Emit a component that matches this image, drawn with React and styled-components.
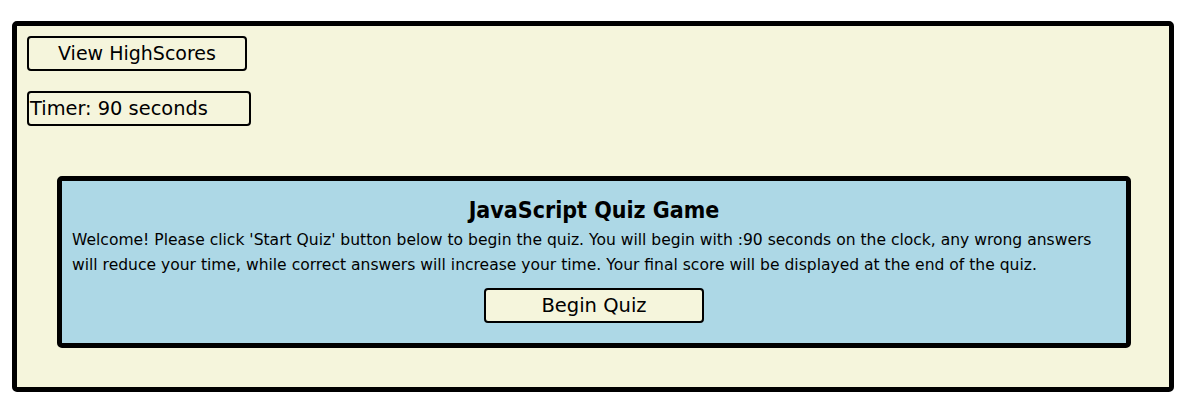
import React from "react";
import styled, { createGlobalStyle } from "styled-components";

const GlobalStyle = createGlobalStyle`
  body {
    margin: 0;
    background: #ffffff;
    font-family: "DejaVu Sans", Verdana, sans-serif;
  }
`;

export default function App() {
  return (
    <>
      <GlobalStyle />
      <Page>
        <Container>
          <HeaderButton>View HighScores</HeaderButton>
          <Timer>Timer: 90 seconds</Timer>
          <QuizCard>
            <Title>JavaScript Quiz Game</Title>
            <Intro>
              Welcome! Please click 'Start Quiz' button below to begin the quiz. You will begin
              with :90 seconds on the clock, any wrong answers will reduce your time, while
              correct answers will increase your time. Your final score will be displayed at the
              end of the quiz.
            </Intro>
            <BeginButton>Begin Quiz</BeginButton>
          </QuizCard>
        </Container>
      </Page>
    </>
  );
}

const Page = styled.div`
  padding: 21px 23px 17px 12px;
`;

const Container = styled.div`
  box-sizing: border-box;
  width: 1162px;
  height: 371px;
  background: #f5f5dc;
  border: 5px solid #000;
  border-radius: 5px;
  padding: 10px 38px 0 10px;
  display: flex;
  flex-direction: column;
  align-items: flex-start;
`;

const HeaderButton = styled.button`
  box-sizing: border-box;
  width: 220px;
  height: 35px;
  background: #f5f5dc;
  border: 2px solid #000;
  border-radius: 4px;
  font-family: "DejaVu Sans", Verdana, sans-serif;
  font-size: 19px;
  line-height: 31px;
  color: #000;
  padding: 0;
`;

const Timer = styled.div`
  box-sizing: border-box;
  width: 224px;
  height: 35px;
  margin-top: 20px;
  border: 2px solid #000;
  border-radius: 4px;
  font-size: 19.4px;
  line-height: 31px;
  padding-left: 1px;
`;

const QuizCard = styled.div`
  box-sizing: border-box;
  align-self: stretch;
  margin: 50px 0 0 30px;
  height: 172px;
  background: #add8e6;
  border: 5px solid #000;
  border-radius: 5px;
  padding: 14px 10px 0 10px;
  display: flex;
  flex-direction: column;
  align-items: center;
`;

const Title = styled.h1`
  margin: 0;
  font-family: "DejaVu Sans Condensed", "DejaVu Sans", sans-serif;
  font-stretch: condensed;
  font-size: 23px;
  font-weight: bold;
  line-height: 30px;
`;

const Intro = styled.p`
  margin: 3px 0 0 0;
  font-size: 15.55px;
  line-height: 25px;
  align-self: stretch;
`;

const BeginButton = styled(HeaderButton)`
  margin-top: 10px;
  font-size: 19.5px;
`;
